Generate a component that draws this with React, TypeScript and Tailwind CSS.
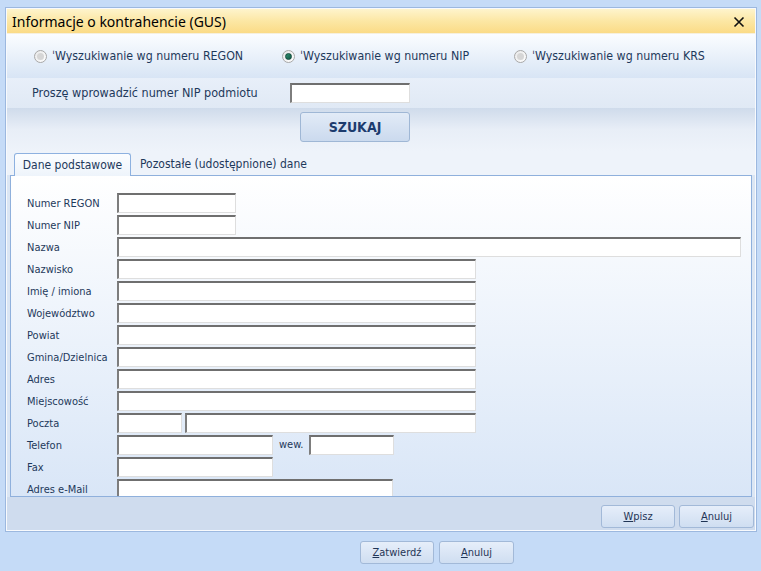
import React from "react";

const Inp = ({ className }: { className: string }) => (
  <div
    className={
      "h-[20px] shrink-0 bg-white border-t-2 border-l-2 border-t-[#6f6f6f] border-l-[#7d7d7d] border-b border-r border-b-[#dedede] border-r-[#dedede] " +
      className
    }
  />
);

const Row = ({ label, children }: { label: string; children: React.ReactNode }) => (
  <div className="flex h-[20px] items-center shrink-0">
    <div className="w-[90px] shrink-0 text-[11px] text-[#1e395b] leading-none">{label}</div>
    {children}
  </div>
);

const Radio = ({ checked }: { checked?: boolean }) => (
  <div className="w-[13px] h-[13px] rounded-full border border-[#a8a8a8] bg-gradient-to-br from-[#e8e8e8] to-[#ffffff] flex items-center justify-center shrink-0">
    {checked ? (
      <div className="w-[7px] h-[7px] rounded-full bg-gradient-to-br from-[#2f8f6f] to-[#155a47] border border-[#0f4a3a]" />
    ) : (
      <div className="w-[7px] h-[7px] rounded-full bg-[#d6d6d6]" />
    )}
  </div>
);

const Btn = ({ first, rest, className }: { first: string; rest: string; className: string }) => (
  <div
    className={
      "h-[23px] rounded-[3px] border border-[#a2b9d8] bg-gradient-to-b from-[#e6eefa] to-[#cfdef1] flex items-center justify-center text-[11px] text-[#1f3455] leading-none " +
      className
    }
  >
    <span>
      <span className="underline">{first}</span>
      {rest}
    </span>
  </div>
);

export default function App() {
  return (
    <div className="w-[761px] h-[571px] bg-[#c5dbf7] overflow-hidden font-['DejaVu_Sans_Condensed','DejaVu_Sans',sans-serif] font-stretch-condensed">
      <div className="h-[7px]" />
      <div className="ml-[5px] w-[752px] h-[525px] border border-[#9cb8df] bg-[#dbe6f4] flex flex-col">
        <div className="border border-white/80 flex flex-col flex-1">
          {/* title bar */}
          <div className="h-[25px] shrink-0 bg-gradient-to-b from-[#fef4cc] via-[#fce7a4] to-[#fbdb86] border-b border-[#f6f0de] flex items-center justify-between pl-[5px] pr-[10px] pt-[1px]">
            <span className="font-['Noto_Sans',sans-serif] text-[14px] text-black leading-none font-normal [font-stretch:normal]">
              Informacje o kontrahencie (GUS)
            </span>
            <svg width="12" height="12" viewBox="0 0 12 12">
              <path d="M1.5 1.5 L10.5 10.5 M10.5 1.5 L1.5 10.5" stroke="#111" strokeWidth="1.6" />
            </svg>
          </div>

          {/* radio row */}
          <div className="h-[44px] shrink-0 bg-gradient-to-b from-[#fbfdff] to-[#d8e5f5] flex items-center pl-[27px] text-[12.3px] text-[#1e395b]">
            <div className="w-[248px] flex items-center gap-[5px]">
              <Radio />
              <span>ˈWyszukiwanie wg numeru REGON</span>
            </div>
            <div className="w-[232px] flex items-center gap-[5px]">
              <Radio checked />
              <span>ˈWyszukiwanie wg numeru NIP</span>
            </div>
            <div className="flex items-center gap-[5px]">
              <Radio />
              <span>ˈWyszukiwanie wg numeru KRS</span>
            </div>
          </div>

          {/* NIP row */}
          <div className="h-[30px] shrink-0 bg-gradient-to-b from-[#e8eff9] to-[#e0e9f5] flex items-center pl-[25px] text-[12.5px] text-[#1e395b]">
            <div className="w-[258px]">Proszę wprowadzić numer NIP podmiotu</div>
            <Inp className="w-[120px]" />
          </div>

          {/* search row */}
          <div className="h-[43px] shrink-0 bg-gradient-to-b from-[#cfdbeb] via-[#e8eef7] to-[#eef3fa] flex items-start pl-[293px] pt-[4px]">
            <div className="w-[110px] h-[30px] rounded-[3px] border border-[#9fb7d5] bg-gradient-to-b from-[#e2ebf7] to-[#cbdaee] flex items-center justify-center text-[14px] font-bold text-[#1c3b6e] leading-none">
              SZUKAJ
            </div>
          </div>

          {/* tabs */}
          <div className="shrink-0 bg-[#eef3fa] flex items-end pl-[7px] h-[24px] text-[12px] text-[#1e395b]">
            <div className="h-[23px] w-[117px] rounded-t-[3px] border border-b-0 border-[#8db1e0] bg-gradient-to-b from-[#fbfdff] to-[#eef4fb] flex items-center justify-center relative top-[1px]">
              Dane podstawowe
            </div>
            <div className="h-[23px] flex items-center pl-[9px]">Pozostałe (udostępnione) dane</div>
          </div>

          {/* panel */}
          <div className="mx-[3px] h-[322px] shrink-0 border border-[#8fb0dc] bg-gradient-to-b from-[#ffffff] to-[#d9e6f7] overflow-hidden pl-[16px] pt-[17px] flex flex-col gap-[2px]">
            <Row label="Numer REGON">
              <Inp className="w-[119px]" />
            </Row>
            <Row label="Numer NIP">
              <Inp className="w-[119px]" />
            </Row>
            <Row label="Nazwa">
              <Inp className="w-[624px]" />
            </Row>
            <Row label="Nazwisko">
              <Inp className="w-[359px]" />
            </Row>
            <Row label="Imię / imiona">
              <Inp className="w-[359px]" />
            </Row>
            <Row label="Województwo">
              <Inp className="w-[359px]" />
            </Row>
            <Row label="Powiat">
              <Inp className="w-[359px]" />
            </Row>
            <Row label="Gmina/Dzielnica">
              <Inp className="w-[359px]" />
            </Row>
            <Row label="Adres">
              <Inp className="w-[359px]" />
            </Row>
            <Row label="Miejscowość">
              <Inp className="w-[359px]" />
            </Row>
            <Row label="Poczta">
              <Inp className="w-[65px]" />
              <div className="w-[3px] shrink-0" />
              <Inp className="w-[291px]" />
            </Row>
            <Row label="Telefon">
              <Inp className="w-[156px]" />
              <div className="w-[36px] shrink-0 pl-[6px] text-[11px] text-[#1e395b]">wew.</div>
              <Inp className="w-[85px]" />
            </Row>
            <Row label="Fax">
              <Inp className="w-[156px]" />
            </Row>
            <Row label="Adres e-Mail">
              <Inp className="w-[276px]" />
            </Row>
          </div>

          {/* lower band */}
          <div className="flex-1 bg-[#cfdcee] flex justify-end items-start pt-[8px] pr-[1px] gap-[4px]">
            <Btn first="W" rest="pisz" className="w-[74px]" />
            <Btn first="A" rest="nuluj" className="w-[75px]" />
          </div>
        </div>
      </div>

      <div className="flex pl-[360px] pt-[9px] gap-[5px]">
        <Btn first="Z" rest="atwierdź" className="w-[74px] h-[22px]" />
        <Btn first="A" rest="nuluj" className="w-[75px] h-[22px]" />
      </div>
    </div>
  );
}
